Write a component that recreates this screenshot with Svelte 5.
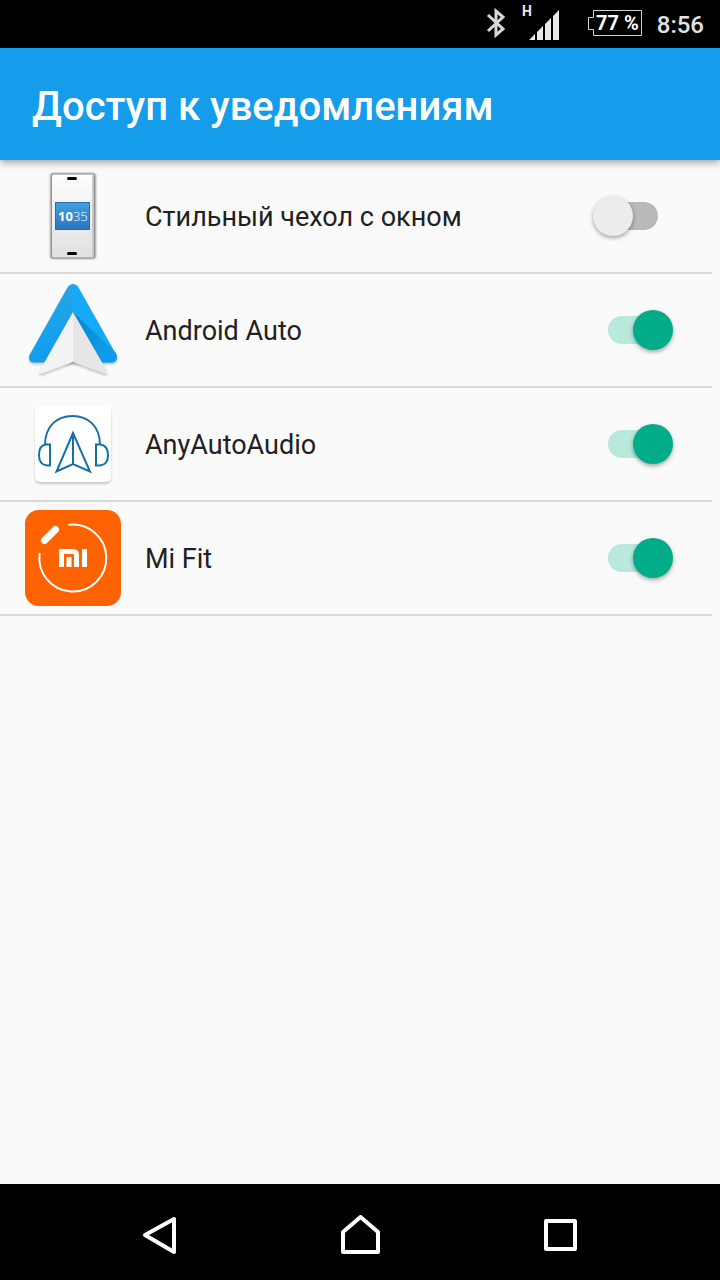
<script lang="ts">
  interface App {
    id: string;
    name: string;
    allowed: boolean;
  }

  let apps = $state<App[]>([
    { id: 'cover', name: 'Стильный чехол с окном', allowed: false },
    { id: 'auto', name: 'Android Auto', allowed: true },
    { id: 'audio', name: 'AnyAutoAudio', allowed: true },
    { id: 'mifit', name: 'Mi Fit', allowed: true },
  ]);
</script>

<div class="screen">
  <div class="status">
    <svg class="bluetooth" width="20" height="30" viewBox="0 0 20 30" aria-hidden="true">
      <path d="M2 7 L17 21 L10 27 V3 L17 9 L2 23" />
    </svg>
    <svg class="signal" width="40" height="40" viewBox="-2 -1 40 40" aria-hidden="true">
      <text x="0" y="12">H</text>
      <path d="M7 36 L13 30 V36 Z M15 28 L21 22 V36 H15 Z M23 20 L29 14 V36 H23 Z M31 12 L37 6 V36 H31 Z" />
    </svg>
    <svg class="battery" width="54" height="28" viewBox="0 0 54 28" aria-hidden="true">
      <path d="M6 1.5 H53.5 V26.5 H5.5 V20.5 H0.5 V8.5 H5.5 V1.5 Z" />
      <text x="8" y="21">77 %</text>
    </svg>
    <span class="clock">8:56</span>
  </div>

  <header>
    <h1>Доступ к уведомлениям</h1>
  </header>

  <main>
    <ul>
      {#each apps as app (app.id)}
        <li>
          <label>
            <svg class="icon" width="96" height="96" viewBox="0 0 96 96" aria-hidden="true">
              {#if app.id === 'cover'}
                <defs>
                  <linearGradient id="body" x1="0" y1="0" x2="0" y2="1">
                    <stop offset="0" stop-color="#fefefe" />
                    <stop offset="1" stop-color="#e0e0e0" />
                  </linearGradient>
                  <linearGradient id="window" x1="0" y1="0" x2="0" y2="1">
                    <stop offset="0" stop-color="#3ea2df" />
                    <stop offset="1" stop-color="#2f74bf" />
                  </linearGradient>
                </defs>
                <rect class="phone-shade" x="25" y="5" width="46" height="86" rx="3" />
                <rect x="26.5" y="6" width="43" height="84" rx="2" fill="url(#body)" stroke="#909090" />
                <path d="M68 7 V89" stroke="#c8c8c8" stroke-width="2" />
                <rect x="42" y="9" width="10" height="3" rx="1.5" />
                <rect x="42" y="84" width="10" height="3" rx="1.5" />
                <rect x="30.5" y="34.5" width="34" height="27" fill="url(#window)" stroke="#2d69ad" />
                <text class="digits" x="33" y="53"><tspan class="hours">10</tspan><tspan class="minutes">35</tspan></text>
              {:else if app.id === 'auto'}
                <defs>
                  <linearGradient id="fold" x1="52" y1="38" x2="80" y2="72" gradientUnits="userSpaceOnUse">
                    <stop offset="0" stop-color="#0b86d3" />
                    <stop offset="1" stop-color="#0f9bea" />
                  </linearGradient>
                  <linearGradient id="left" x1="0" y1="0" x2="0" y2="1">
                    <stop offset="0" stop-color="#25a5e6" />
                    <stop offset="1" stop-color="#109eee" />
                  </linearGradient>
                </defs>
                <g class="lifted">
                  <path d="M48 2 Q44.500 2 42.500 5.500 L4.500 73 Q2.500 80 9 80.500 H48 Z" fill="url(#left)" />
                  <path d="M48 2 Q51.500 2 53.500 5.500 L91.500 73 Q93.500 80 87 80.500 H48 Z" fill="#14aaf8" />
                  <path d="M48 30 L91 71 Q93.500 79 87 80.500 H70 Z" fill="url(#fold)" />
                </g>
                <g class="lifted">
                  <path d="M48 30 L14.500 89 Q14 92 17 91.500 L48 80 Z" fill="#f3f3f3" />
                  <path d="M48 30 L82 89 Q82.500 92 79.500 91.500 L48 80 Z" fill="#e6e6e6" />
                </g>
              {:else if app.id === 'audio'}
                <rect class="lifted" x="10" y="10" width="76" height="76" rx="5" fill="#fff" />
                <path
                  class="line"
                  d="M20 49 C20 30 32 20 47.500 20 C63 20 75 30 75 49 M25 48.500 H21 C16 49 14 53 14 59 C14 65 17 69 22 69.500 H25 Z M71 48.500 H75 C80 49 83 53 83 59 C83 65 80 69 75 69.500 H71 Z M48 37 L31.500 75.500 L48 68 L65 75.500 Z V68"
                />
              {:else}
                <rect width="96" height="96" rx="14" fill="#ff6200" />
                <path d="M43.500 14.800 A33.500 33.500 0 1 1 14.700 43" class="ring" />
                <path d="M19.500 30.500 L30.500 19.500" class="capsule" />
                <path d="M36.500 57 V41.500 H48 Q51.500 41.500 51.500 45 V57" class="mark" />
                <path d="M44 57 V47 M59.500 57 V39" class="mark" />
              {/if}
            </svg>
            <span class="name">{app.name}</span>
            <input type="checkbox" role="switch" bind:checked={app.allowed} />
          </label>
        </li>
      {/each}
    </ul>
  </main>

  <nav>
    <button type="button" aria-label="Назад">
      <svg width="40" height="40" viewBox="0 0 40 40"><path d="M5 20 L34 4 V37 Z" /></svg>
    </button>
    <button type="button" aria-label="Главный экран">
      <svg width="40" height="40" viewBox="0 0 40 40"><path d="M3 37 V17 L20.500 2 L38 17 V37 Z" /></svg>
    </button>
    <button type="button" aria-label="Недавние приложения">
      <svg width="40" height="40" viewBox="0 0 40 40"><path d="M6 6 H35 V34 H6 Z" /></svg>
    </button>
  </nav>
</div>

<style>
  :global(body) { margin: 0; }

  .screen {
    display: flex;
    flex-direction: column;
    min-height: 100vh;
    background: #fafafa;
    color: #212121;
    font-family: Roboto, sans-serif;
  }

  .status {
    display: flex;
    align-items: center;
    justify-content: flex-end;
    height: 48px;
    padding-right: 16px;
    background: #000;
    color: #e2e2e2;
  }
  .status svg { margin-bottom: 2px; }
  .bluetooth { margin-right: 14px; fill: none; stroke: #d8d8d8; stroke-width: 3; }
  .signal { margin-right: 28px; fill: #e8e8e8; }
  .signal text { font-size: 14px; font-weight: 700; }
  .battery { margin-right: 15px; }
  .battery path { fill: none; stroke: #d0d0d0; }
  .battery text { font-size: 20px; font-weight: 700; fill: #fff; }
  .clock { padding-top: 2px; font-size: 24px; font-weight: 500; }

  header {
    display: flex;
    align-items: center;
    height: 112px;
    padding: 0 32px;
    background: #159ceb;
    box-shadow: 0 2px 8px rgba(0, 0, 0, 0.4);
    z-index: 1;
  }
  h1 { margin: 0; padding-top: 6px; color: #fff; font-size: 40px; font-weight: 500; line-height: 48px; }

  main { flex: 1; padding-right: 8px; }
  ul { margin: 0; padding: 0; list-style: none; }
  li { border-bottom: 2px solid #dadada; }
  label { display: flex; align-items: center; gap: 24px; padding: 8px 39px 8px 25px; }
  .icon { flex: none; }
  .name { flex: 1; padding-top: 2px; font-size: 27px; line-height: 36px; }

  .phone-shade { fill: #bbb; filter: drop-shadow(0 0 1px rgba(0, 0, 0, 0.3)); }
  .digits { fill: #fff; font-family: "Open Sans", sans-serif; font-size: 13px; }
  .hours { font-weight: 700; }
  .minutes { font-weight: 300; }
  .lifted { filter: drop-shadow(0 2px 1px rgba(0, 0, 0, 0.2)); }
  .line { fill: none; stroke: #1470a8; stroke-width: 2; }
  .ring { fill: none; stroke: #fff; stroke-width: 2; }
  .capsule { stroke: #fff; stroke-width: 7; stroke-linecap: round; }
  .mark { fill: none; stroke: #fff; stroke-width: 5; }

  input {
    appearance: none;
    display: grid;
    align-items: center;
    flex: none;
    width: 80px;
    height: 40px;
    margin: 0;
  }
  input::before,
  input::after { content: ''; grid-area: 1 / 1; }
  input::before {
    justify-self: center;
    width: 50px;
    height: 28px;
    border-radius: 14px;
    background: #b9b9b9;
  }
  input::after {
    width: 40px;
    height: 40px;
    border-radius: 50%;
    background: #ececec;
    box-shadow: 0 2px 4px rgba(0, 0, 0, 0.35);
  }
  input:checked::before { background: #b9e8dd; }
  input:checked::after { justify-self: end; background: #00ad88; }

  nav {
    display: grid;
    grid-template-columns: repeat(3, 1fr);
    height: 96px;
    padding: 0 60px;
    background: #000;
  }
  button {
    display: flex;
    align-items: center;
    justify-content: center;
    padding: 6px 0 0;
    border: 0;
    background: none;
  }
  button path { fill: none; stroke: #fff; stroke-width: 4; stroke-linejoin: round; }
</style>
